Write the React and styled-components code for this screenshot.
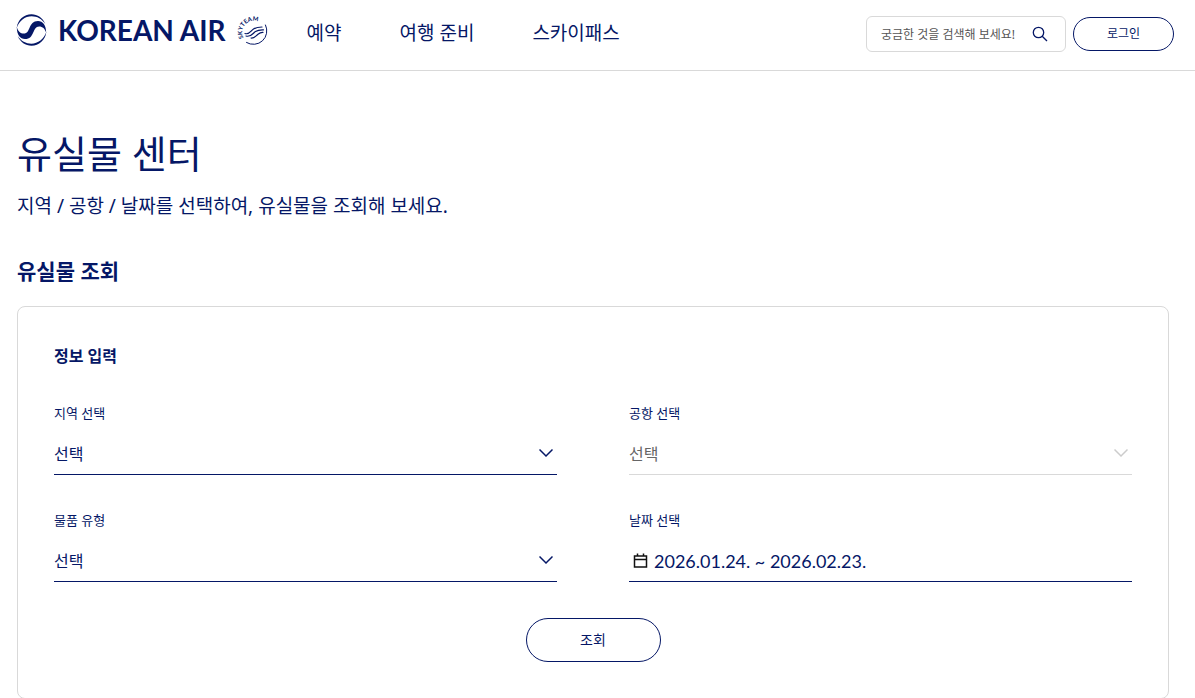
import React from "react";
import styled, { createGlobalStyle } from "styled-components";

const navy = "#051766";
const line = "#d9d9d9";

const GlobalStyle = createGlobalStyle`
  *, *::before, *::after { box-sizing: border-box; }
  body {
    margin: 0;
    background: #fff;
    color: ${navy};
    font-family: "Noto Sans", "Noto Sans CJK KR", sans-serif;
  }
  html { scrollbar-width: none; }
  h1, h2, h3, p { margin: 0; }
  button, input, select { font-family: inherit; color: inherit; }
`;

const Header = styled.header`
  display: flex;
  align-items: flex-start;
  justify-content: space-between;
  height: 71px;
  padding: 14px 21px 0 16px;
  border-bottom: 1px solid ${line};
`;

const HeaderStart = styled.div`
  display: flex;
  align-items: flex-start;
  gap: 38px;
`;

const HeaderEnd = styled.div`
  display: flex;
  align-items: center;
  gap: 7px;
  margin-top: 2px;
`;

const Brand = styled.a`
  display: flex;
  align-items: center;
  gap: 11px;
  height: 32px;
  color: ${navy};
  text-decoration: none;
`;

const Wordmark = styled.span`
  font-family: Lato, sans-serif;
  font-weight: 700;
  font-size: 28px;
  line-height: 32px;
  white-space: nowrap;
`;

const Nav = styled.nav`
  display: flex;
  gap: 58px;
`;

const NavLink = styled.a`
  color: ${navy};
  font-size: 19px;
  line-height: 38px;
  text-decoration: none;
  white-space: nowrap;
`;

const SearchBox = styled.form`
  display: flex;
  align-items: center;
  width: 200px;
  height: 36px;
  padding: 0 14px;
  border: 1px solid ${line};
  border-radius: 6px;
`;

const SearchInput = styled.input`
  flex: 1;
  min-width: 0;
  padding: 0;
  border: 0;
  outline: 0;
  background: none;
  font-size: 12px;
  &::placeholder { color: #555; opacity: 1; }
`;

const IconButton = styled.button`
  display: flex;
  padding: 0;
  margin-right: 2px;
  border: 0;
  background: none;
  cursor: pointer;
`;

const PillButton = styled.button`
  width: ${(p) => (p.$large ? 135 : 101)}px;
  height: ${(p) => (p.$large ? 44 : 34)}px;
  padding: 0 0 2px;
  border: 1px solid ${navy};
  border-radius: 22px;
  background: #fff;
  font-size: ${(p) => (p.$large ? 14 : 12)}px;
  cursor: pointer;
`;

const Main = styled.main`
  padding: 54px 26px 0 17px;
`;

const PageTitle = styled.h1`
  font-size: 38px;
  line-height: 56px;
  font-weight: 400;
`;

const Lead = styled.p`
  margin-top: 10px;
  font-size: 19px;
  line-height: 30px;
`;

const SectionTitle = styled.h2`
  margin-top: 35px;
  font-size: 21px;
  line-height: 30px;
  font-weight: 700;
`;

const Card = styled.section`
  display: flex;
  flex-direction: column;
  margin-top: 20px;
  padding: 36px;
  border: 1px solid ${line};
  border-radius: 8px;
`;

const CardTitle = styled.h3`
  font-size: 16px;
  line-height: 26px;
  font-weight: 700;
`;

const Fields = styled.div`
  display: grid;
  grid-template-columns: 1fr 1fr;
  gap: 36px 72px;
  margin: 35px 0 36px;
`;

const Label = styled.label`
  display: block;
  font-size: 13px;
  line-height: 18px;
`;

const Control = styled.div`
  position: relative;
  display: flex;
  align-items: center;
  height: 41px;
  margin-top: 12px;
  border-bottom: 1px solid ${(p) => (p.$disabled ? line : navy)};
`;

const Select = styled.select`
  appearance: none;
  width: 100%;
  height: 40px;
  padding: 0;
  border: 0;
  outline: 0;
  background: none;
  font-size: 16px;
  color: ${navy};
  &:disabled { color: #666; opacity: 1; }
`;

const Chevron = styled.svg`
  position: absolute;
  right: 4px;
  top: 12px;
  pointer-events: none;
`;

const DateInput = styled.input`
  flex: 1;
  min-width: 0;
  padding: 0;
  border: 0;
  outline: 0;
  background: none;
  font-family: Lato, "Noto Sans CJK KR", sans-serif;
  font-size: 18px;
`;

const CalendarIcon = styled.svg`
  flex: none;
  margin: 0 6px 0 4px;
`;

const SubmitRow = styled.div`
  display: flex;
  justify-content: center;
`;

function SelectField({ id, label, disabled }) {
  return (
    <div>
      <Label htmlFor={id}>{label}</Label>
      <Control $disabled={disabled}>
        <Select id={id} disabled={disabled}>
          <option>선택</option>
        </Select>
        <Chevron width="14" height="14" viewBox="0 0 14 14" fill="none" stroke={disabled ? "#ccc" : navy} strokeWidth="1.5">
          <path d="M0.5 3.5L7 10L13.5 3.5" />
        </Chevron>
      </Control>
    </div>
  );
}

function KoreanAirMark() {
  return (
    <svg width="31" height="32" viewBox="0 0 30 32" fill={navy} aria-hidden="true">
      <path d="M.2 14C1 6 7.500.3 15 .3c6 0 11.300 3.600 13.800 9.700C25.500 5 20.500 2.300 15.200 2.300 8.500 2.300 2.500 7 .2 14Z" />
      <path d="M29.800 18C29 26 22.500 31.700 15 31.700c-6 0-11.300-3.600-13.800-9.700C4.500 27 9.500 29.700 14.800 29.700c6.700 0 12.700-4.700 15-11.700Z" />
      <path d="M.3 13C1.500 17.500 4 19.600 7.300 19.600 14.500 19.600 11.500 7 21.500 7c4.800 0 8.200 4.200 8.200 12C28.500 14.500 26 12.400 22.700 12.400 15.500 12.400 18.500 25 8.500 25 3.700 25 .3 20.800.3 13Z" />
    </svg>
  );
}

function SkyTeamMark() {
  return (
    <svg width="32" height="32" viewBox="0 0 32 32" fill="none" stroke={navy} strokeLinecap="round" aria-hidden="true">
      <defs>
        <path id="skyteam-arc" d="M6.500 24A11.500 11.500 0 0 1 27 13" />
      </defs>
      <text fill={navy} stroke="none" fontFamily="Lato, sans-serif" fontWeight="700" fontSize="6">
        <textPath href="#skyteam-arc">SKYTEAM</textPath>
      </text>
      <path d="M28.500 11A13.500 13.500 0 0 1 9.500 28.500" strokeWidth="1" />
      <path d="M8 19.500C12.500 21 13.500 17 16.500 15S22 13 25 13M9 22C14 23.500 15.500 19.500 18.500 17.500S24 15.800 26.500 15.800M14 24C17.500 24.500 18.500 22 21 20.200S24 18.500 26 18.300" strokeWidth="1.200" />
    </svg>
  );
}

export default function App() {
  return (
    <>
      <GlobalStyle />
      <Header>
        <HeaderStart>
          <Brand href="#" aria-label="KOREAN AIR">
            <KoreanAirMark />
            <Wordmark>KOREAN AIR</Wordmark>
            <SkyTeamMark />
          </Brand>
          <Nav>
            <NavLink href="#">예약</NavLink>
            <NavLink href="#">여행 준비</NavLink>
            <NavLink href="#">스카이패스</NavLink>
          </Nav>
        </HeaderStart>
        <HeaderEnd>
          <SearchBox role="search" onSubmit={(e) => e.preventDefault()}>
            <SearchInput type="text" aria-label="검색" placeholder="궁금한 것을 검색해 보세요!" />
            <IconButton type="submit" aria-label="검색">
              <svg width="18" height="18" viewBox="0 0 18 18" fill="none" stroke={navy} strokeWidth="1.300">
                <circle cx="7.500" cy="7.500" r="5.200" />
                <path d="M11.200 11.200L16 16" />
              </svg>
            </IconButton>
          </SearchBox>
          <PillButton type="button">로그인</PillButton>
        </HeaderEnd>
      </Header>
      <Main>
        <PageTitle>유실물 센터</PageTitle>
        <Lead>지역 / 공항 / 날짜를 선택하여, 유실물을 조회해 보세요.</Lead>
        <SectionTitle>유실물 조회</SectionTitle>
        <Card>
          <CardTitle>정보 입력</CardTitle>
          <Fields>
            <SelectField id="region" label="지역 선택" />
            <SelectField id="airport" label="공항 선택" disabled />
            <SelectField id="item" label="물품 유형" />
            <div>
              <Label htmlFor="period">날짜 선택</Label>
              <Control>
                <CalendarIcon width="15" height="16" viewBox="0 0 15 16" fill="none" stroke="#111" strokeWidth="1.500">
                  <path d="M1.500 3H13.500V14H1.500ZM1.500 6.500H13.500M4.500 .5V3M10.500 .5V3" />
                </CalendarIcon>
                <DateInput id="period" type="text" readOnly value="2026.01.24. ~ 2026.02.23." />
              </Control>
            </div>
          </Fields>
          <SubmitRow>
            <PillButton type="button" $large>조회</PillButton>
          </SubmitRow>
        </Card>
      </Main>
    </>
  );
}
